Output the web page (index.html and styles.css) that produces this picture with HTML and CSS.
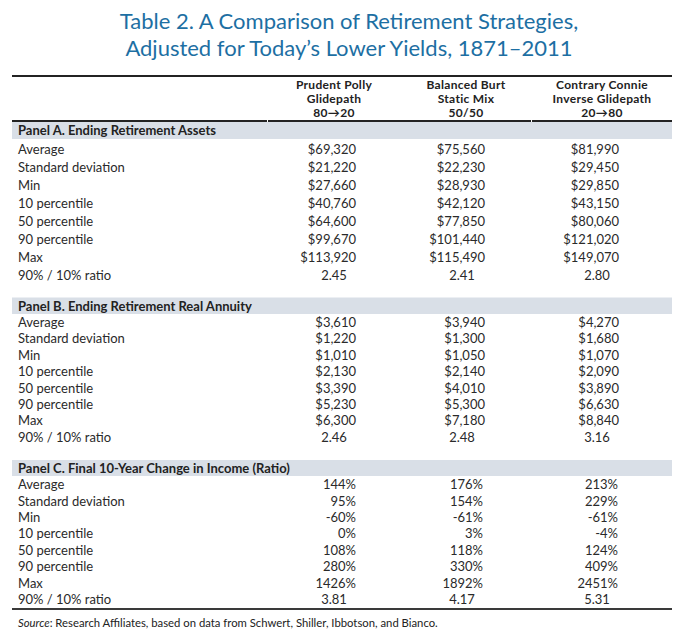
FILE: index.html
```html
<!DOCTYPE html>
<html lang="en">
<head>
<meta charset="utf-8">
<title>Table 2</title>
<link rel="stylesheet" href="styles.css">
</head>
<body>
<h1 class="title">Table 2. A Comparison of Retirement Strategies,<br>Adjusted for Today’s Lower Yields, 1871–2011</h1>
<div class="wrap">
<table class="data">
  <colgroup>
    <col class="w-lab"><col class="w-c1"><col class="w-c2"><col class="w-c3">
  </colgroup>
  <thead>
    <tr>
      <th class="h-lab gap"></th>
      <th class="h-col"><div class="hl">Prudent Polly</div><div class="hl">Glidepath</div><div class="hl">80→20</div></th>
      <th class="h-col gap"><div class="hl">Balanced Burt</div><div class="hl">Static Mix</div><div class="hl">50/50</div></th>
      <th class="h-col"><div class="hl">Contrary Connie</div><div class="hl">Inverse Glidepath</div><div class="hl">20→80</div></th>
    </tr>
  </thead>
  <tbody class="panel-a">
    <tr class="panel"><td colspan="4">Panel A. Ending Retirement Assets</td></tr>
    <tr><td class="lab">Average</td><td class="n1">$69,320</td><td class="n2">$75,560</td><td class="n3">$81,990</td></tr>
    <tr><td class="lab">Standard deviation</td><td class="n1">$21,220</td><td class="n2">$22,230</td><td class="n3">$29,450</td></tr>
    <tr><td class="lab">Min</td><td class="n1">$27,660</td><td class="n2">$28,930</td><td class="n3">$29,850</td></tr>
    <tr><td class="lab">10 percentile</td><td class="n1">$40,760</td><td class="n2">$42,120</td><td class="n3">$43,150</td></tr>
    <tr><td class="lab">50 percentile</td><td class="n1">$64,600</td><td class="n2">$77,850</td><td class="n3">$80,060</td></tr>
    <tr><td class="lab">90 percentile</td><td class="n1">$99,670</td><td class="n2">$101,440</td><td class="n3">$121,020</td></tr>
    <tr><td class="lab">Max</td><td class="n1">$113,920</td><td class="n2">$115,490</td><td class="n3">$149,070</td></tr>
    <tr><td class="lab">90% / 10% ratio</td><td class="r1">2.45</td><td class="r2">2.41</td><td class="r3">2.80</td></tr>
    <tr class="spacer sp-a"><td colspan="4"></td></tr>
  </tbody>
  <tbody class="panel-b">
    <tr class="panel"><td colspan="4">Panel B. Ending Retirement Real Annuity</td></tr>
    <tr><td class="lab">Average</td><td class="n1">$3,610</td><td class="n2">$3,940</td><td class="n3">$4,270</td></tr>
    <tr><td class="lab">Standard deviation</td><td class="n1">$1,220</td><td class="n2">$1,300</td><td class="n3">$1,680</td></tr>
    <tr><td class="lab">Min</td><td class="n1">$1,010</td><td class="n2">$1,050</td><td class="n3">$1,070</td></tr>
    <tr><td class="lab">10 percentile</td><td class="n1">$2,130</td><td class="n2">$2,140</td><td class="n3">$2,090</td></tr>
    <tr><td class="lab">50 percentile</td><td class="n1">$3,390</td><td class="n2">$4,010</td><td class="n3">$3,890</td></tr>
    <tr><td class="lab">90 percentile</td><td class="n1">$5,230</td><td class="n2">$5,300</td><td class="n3">$6,630</td></tr>
    <tr><td class="lab">Max</td><td class="n1">$6,300</td><td class="n2">$7,180</td><td class="n3">$8,840</td></tr>
    <tr><td class="lab">90% / 10% ratio</td><td class="r1">2.46</td><td class="r2">2.48</td><td class="r3">3.16</td></tr>
    <tr class="spacer sp-b"><td colspan="4"></td></tr>
  </tbody>
  <tbody class="panel-c">
    <tr class="panel"><td colspan="4">Panel C. Final 10-Year Change in Income (Ratio)</td></tr>
    <tr><td class="lab">Average</td><td class="p1">144%</td><td class="p2">176%</td><td class="p3">213%</td></tr>
    <tr><td class="lab">Standard deviation</td><td class="p1">95%</td><td class="p2">154%</td><td class="p3">229%</td></tr>
    <tr><td class="lab">Min</td><td class="p1">-60%</td><td class="p2">-61%</td><td class="p3">-61%</td></tr>
    <tr><td class="lab">10 percentile</td><td class="p1">0%</td><td class="p2">3%</td><td class="p3">-4%</td></tr>
    <tr><td class="lab">50 percentile</td><td class="p1">108%</td><td class="p2">118%</td><td class="p3">124%</td></tr>
    <tr><td class="lab">90 percentile</td><td class="p1">280%</td><td class="p2">330%</td><td class="p3">409%</td></tr>
    <tr><td class="lab">Max</td><td class="p1">1426%</td><td class="p2">1892%</td><td class="p3">2451%</td></tr>
    <tr><td class="lab">90% / 10% ratio</td><td class="r1">3.81</td><td class="r2">4.17</td><td class="r3">5.31</td></tr>
  </tbody>
</table>
<p class="source"><em>Source</em>: Research Affiliates, based on data from Schwert, Shiller, Ibbotson, and Bianco.</p>
</div>
</body>
</html>
```

FILE: styles.css
```css
html, body {
  margin: 0;
  padding: 0;
  background: #ffffff;
}

body {
  font-family: Lato, "Liberation Sans", sans-serif;
  color: #2a2a2a;
  width: 690px;
}

.title {
  margin: 7px 0 0 0;
  padding-left: 8px;
  font-size: 22px;
  line-height: 27px;
  font-weight: 400;
  color: #1d6fa3;
  text-align: center;
}

.wrap {
  margin: 14px 18px 0 12px;
  width: 660px;
}

.data {
  width: 660px;
  table-layout: fixed;
  border-collapse: collapse;
  border-top: 2px solid #232323;
  border-bottom: 2px solid #3a3a3a;
  font-size: 13px;
}

.w-lab { width: 256px; }
.w-c1 { width: 132px; }
.w-c2 { width: 132px; }
.w-c3 { width: 140px; }

.data th {
  padding: 1px 0 2px 0;
  font-weight: 700;
  text-align: center;
  vertical-align: bottom;
  color: #222;
  background-image: linear-gradient(#232323, #232323);
  background-repeat: no-repeat;
  background-position: left bottom;
  background-size: 100% 2px;
}

.data th.gap {
  background-size: calc(100% - 1px) 2px;
}

.hl {
  height: 14px;
  font-size: 12px;
  line-height: 14px;
  letter-spacing: 0.3px;
  white-space: nowrap;
}

.data td {
  padding: 0;
  white-space: nowrap;
}

.panel td {
  background: #d9dfe7;
  font-weight: 700;
  padding-left: 6px;
  color: #222;
}

.panel-a .panel td {
  height: 17px;
  line-height: 17px;
  border-bottom: 1px solid #ffffff;
}

.panel-a tr:not(.panel):not(.spacer) td {
  height: 18px;
  line-height: 18px;
}

.panel-b .panel td,
.panel-c .panel td {
  height: 16px;
  line-height: 16px;
}

.panel-b .panel td { border-top: 1px solid #eceff3; }

.panel-b tr:not(.panel):not(.spacer) td,
.panel-c tr:not(.panel):not(.spacer) td {
  height: 16.4px;
  line-height: 16.4px;
}

.sp-a td { height: 13px; }
.sp-b td { height: 15px; }

.data td.lab {
  padding-left: 6px;
}

.data td.n1, .data td.p1 { text-align: right; padding-right: 44px; }
.data td.n2 { text-align: right; padding-right: 47px; }
.data td.p2 { text-align: right; padding-right: 49px; }
.data td.n3 { text-align: right; padding-right: 53px; }
.data td.p3 { text-align: right; padding-right: 54px; }

.data td.r1 { text-align: center; }
.data td.r2 { text-align: center; padding-right: 8px; }
.data td.r3 { text-align: center; padding-right: 10px; }

.source {
  margin: 6px 0 0 6px;
  font-size: 11.3px;
  line-height: 14px;
  color: #222;
}

.source em {
  font-style: italic;
}
```
